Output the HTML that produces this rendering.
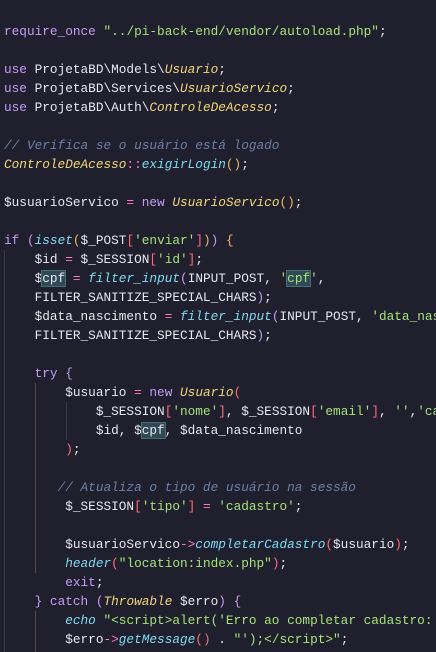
<!DOCTYPE html>
<html><head><meta charset="utf-8"><style>
html,body{margin:0;padding:0;background:#1f1f2d;width:436px;height:652px;overflow:hidden;position:relative}
pre{position:absolute;left:4px;top:3px;width:432px;overflow:hidden;margin:0;font-family:"Liberation Mono",monospace;font-size:12.75px;line-height:19px;color:#e8e8f0;white-space:pre}
.k{color:#c69cf6}.o{color:#ff79c6}.s{color:#a6e27a}.f{color:#7fdcf3;font-style:italic}.c{color:#f1d77a;font-style:italic}
.m{color:#6f7ea8;font-style:italic}.p{color:#c69cf6}.y{color:#f3b562}.r{color:#ff6b7a}
.h{background:#2f4a55;outline:1px solid #4a6a75}
.g{position:absolute;width:1px;background:#3a3a4e}
</style></head><body>
<div class="g" style="left:4px;top:250px;height:402px"></div>
<div class="g" style="left:35px;top:383px;height:190px;background:#5a4a3e"></div>
<div class="g" style="left:35px;top:611px;height:41px;background:#5a4a3e"></div>
<div class="g" style="left:66px;top:402px;height:38px"></div>
<pre>    <span class="f"> </span>
<span class="k">require_once</span> <span class="s">"../pi-back-end/vendor/autoload.php"</span>;

<span class="k">use</span> ProjetaBD\Models\<span class="c">Usuario</span>;
<span class="k">use</span> ProjetaBD\Services\<span class="c">UsuarioServico</span>;
<span class="k">use</span> ProjetaBD\Auth\<span class="c">ControleDeAcesso</span>;

<span class="m">// Verifica se o usuário está logado</span>
<span class="c">ControleDeAcesso</span><span class="o">::</span><span class="f">exigirLogin</span><span class="y">()</span>;

$usuarioServico <span class="o">=</span> <span class="k">new</span> <span class="c">UsuarioServico</span><span class="y">()</span>;

<span class="k">if</span> <span class="p">(</span><span class="f">isset</span><span class="y">(</span>$_POST<span class="r">[</span><span class="s">'enviar'</span><span class="r">]</span><span class="y">)</span><span class="p">)</span> <span class="y">{</span>
    $id <span class="o">=</span> $_SESSION<span class="r">[</span><span class="s">'id'</span><span class="r">]</span>;
    $<span class="h">cpf</span> <span class="o">=</span> <span class="f">filter_input</span><span class="p">(</span>INPUT_POST, <span class="s">'<span class="h">cpf</span>'</span>,
    FILTER_SANITIZE_SPECIAL_CHARS<span class="p">)</span>;
    $data_nascimento <span class="o">=</span> <span class="f">filter_input</span><span class="p">(</span>INPUT_POST, <span class="s">'data_nascimento'</span>,
    FILTER_SANITIZE_SPECIAL_CHARS<span class="p">)</span>;

    <span class="k">try</span> <span class="p">{</span>
        $usuario <span class="o">=</span> <span class="k">new</span> <span class="c">Usuario</span><span class="r">(</span>
            $_SESSION<span class="r">[</span><span class="s">'nome'</span><span class="r">]</span>, $_SESSION<span class="r">[</span><span class="s">'email'</span><span class="r">]</span>, <span class="s">''</span>,<span class="s">'cadastro'</span>,
            $id, $<span class="h">cpf</span>, $data_nascimento
        <span class="r">)</span>;

       <span class="m">// Atualiza o tipo de usuário na sessão</span>
        $_SESSION<span class="r">[</span><span class="s">'tipo'</span><span class="r">]</span> <span class="o">=</span> <span class="s">'cadastro'</span>;

        $usuarioServico<span class="o">-&gt;</span><span class="f">completarCadastro</span><span class="r">(</span>$usuario<span class="r">)</span>;
        <span class="f">header</span><span class="r">(</span><span class="s">"location:index.php"</span><span class="r">)</span>;
        <span class="k">exit</span>;
    <span class="p">}</span> <span class="k">catch</span> <span class="p">(</span><span class="c">Throwable</span> $erro<span class="p">)</span> <span class="p">{</span>
        <span class="f">echo</span> <span class="s">"&lt;script&gt;alert('Erro ao completar cadastro: "</span>
        $erro<span class="o">-&gt;</span><span class="f">getMessage</span><span class="r">()</span> . <span class="s">"');&lt;/script&gt;"</span>;
</pre>
</body></html>
